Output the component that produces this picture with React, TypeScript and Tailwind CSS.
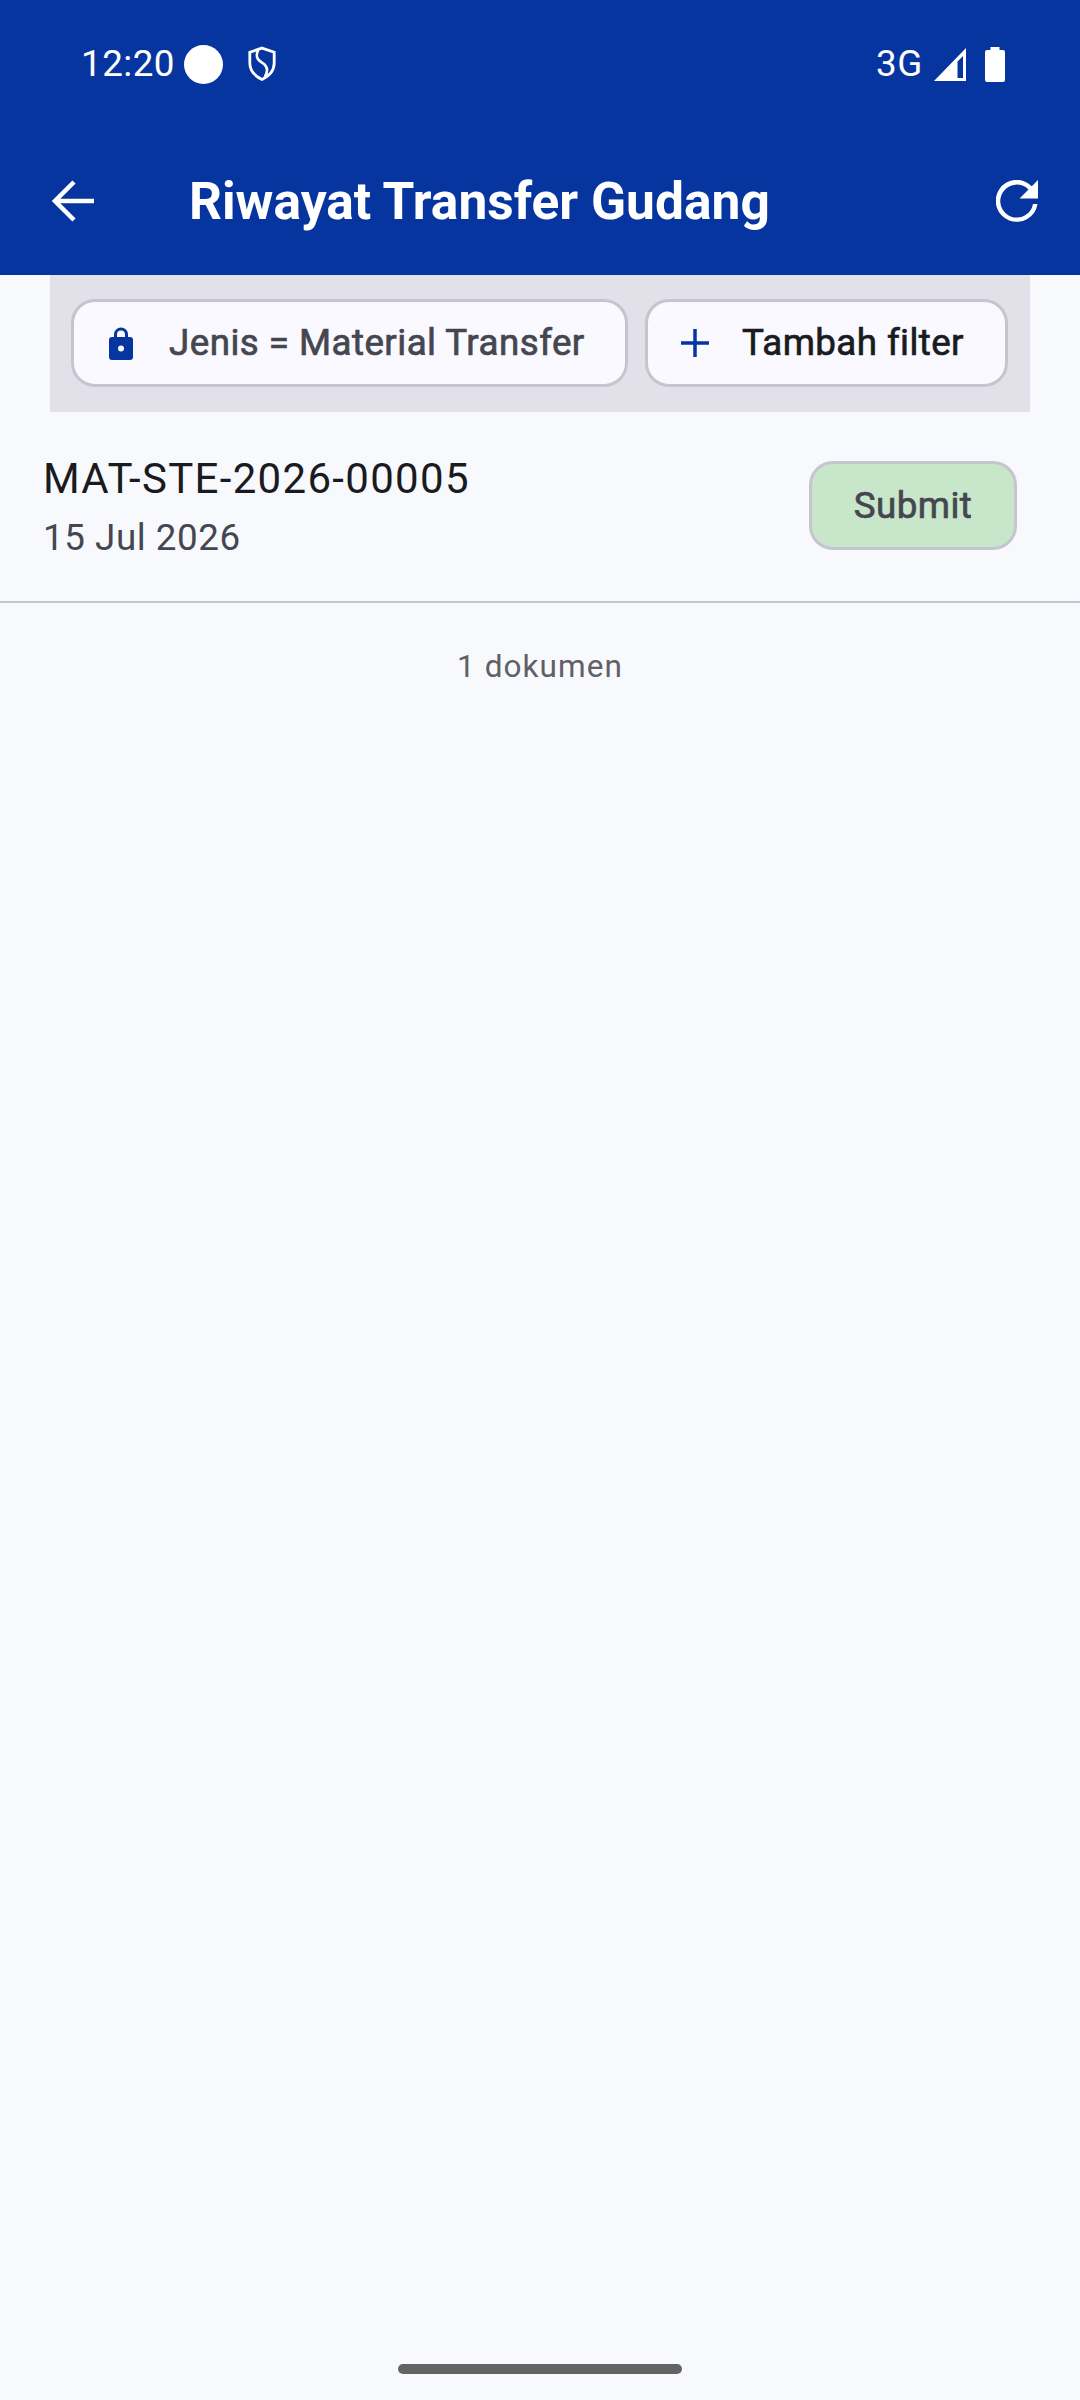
export default function App() {
  return (
    <div className="relative w-[1080px] h-[2400px] flex flex-col bg-[#f7f9fd] overflow-hidden" style={{ fontFamily: "Roboto, sans-serif" }}>
      <header className="h-[275px] shrink-0 bg-[#0735a0] text-white flex flex-col">
        <div className="h-[126px] pt-[42px] pl-[81px] pr-[75px] flex items-start justify-between">
          <div className="flex items-center h-[44px]">
            <span className="text-[36.75px] leading-[44px] tracking-[0.5px]">12:20</span>
            <span className="ml-[9px] w-[39px] h-[39px] rounded-full bg-white" />
            <svg className="ml-[24px]" width="30" height="36" viewBox="0 0 32 38" fill="none" stroke="white" strokeWidth="3">
              <path d="M16 2 L29 6.5 V18 C29 26 23.5 32 16 35.5 C8.500 32 3 26 3 18 V6.500 Z" />
              <path d="M12 4 C9 10 10 14 16 17.500 C22 21 23 26 19 33" strokeWidth="2.800" />
            </svg>
          </div>
          <div className="flex items-center h-[44px]">
            <span className="text-[36.75px] leading-[44px] tracking-[0.7px]">3G</span>
            <svg className="ml-[11px]" width="32" height="33" viewBox="0 0 32 33" fill="white">
              <path fillRule="evenodd" d="M32 0 V33 H0 Z M29 8 L23.500 13.500 V30 H29 Z" />
            </svg>
            <svg className="ml-[19px]" width="20" height="35" viewBox="0 0 20 35" fill="white">
              <path d="M5.500 0 H14.500 V3 H18 A2 2 0 0 1 20 5 V33 A2 2 0 0 1 18 35 H2 A2 2 0 0 1 0 33 V5 A2 2 0 0 1 2 3 H5.500 Z" />
            </svg>
          </div>
        </div>
        <div className="flex-1 flex items-center pl-[52px] pr-[42px]">
          <svg width="42" height="42" viewBox="0 0 42 42" fill="none" stroke="white" strokeWidth="4.500">
            <path d="M42 21 H3 M22 2 L3 21 L22 40" />
          </svg>
          <h1 className="ml-[95px] pt-[2px] flex-1 text-[51.5px] leading-[60px] font-bold whitespace-nowrap">Riwayat Transfer Gudang</h1>
          <svg width="42" height="42" viewBox="0 0 42 42" fill="white">
            <path d="M35.800 6.200 A21 21 0 1 0 41.500 24 H37 A16.500 16.500 0 1 1 32.500 9.500 L23.500 18.500 H42 V0 Z" />
          </svg>
        </div>
      </header>

      <div className="ml-[50px] w-[980px] h-[137px] shrink-0 bg-[#e2e1ea] pl-[21px] flex items-start pt-[24px] gap-[17px]">
        <div className="w-[557px] h-[88px] rounded-[24px] border-[3px] border-[#c6c5cf] bg-[#f9f9ff] flex items-center pl-[35px]">
          <svg width="24" height="33" viewBox="0 0 24 33" fill="#0735a0">
            <path fillRule="evenodd" d="M5 10 V7.500 A7 7 0 0 1 19 7.500 V10 H21 A3 3 0 0 1 24 13 V30 A3 3 0 0 1 21 33 H3 A3 3 0 0 1 0 30 V13 A3 3 0 0 1 3 10 Z M8 10 H16 V7.500 A4 4 0 0 0 8 7.500 Z M12 18.500 A3 3 0 1 0 12 24.500 A3 3 0 1 0 12 18.500 Z" />
          </svg>
          <span className="ml-[36px] text-[36.75px] leading-[44px] [-webkit-text-stroke:0.7px] tracking-[0.45px] text-[#45464f] whitespace-nowrap">Jenis = Material Transfer</span>
        </div>
        <div className="w-[363px] h-[88px] rounded-[24px] border-[3px] border-[#c6c5cf] bg-[#f9f9ff] flex items-center pl-[33px]">
          <svg width="28" height="28" viewBox="0 0 28 28" stroke="#0735a0" strokeWidth="3.500" fill="none">
            <path d="M14 0 V28 M0 14 H28" />
          </svg>
          <span className="ml-[33px] text-[36.75px] leading-[44px] [-webkit-text-stroke:0.7px] tracking-[0.4px] text-[#1a1b20] whitespace-nowrap">Tambah filter</span>
        </div>
      </div>

      <div className="h-[189px] shrink-0 flex items-start justify-between pl-[43px] pr-[63px]">
        <div className="pt-[42px]">
          <div className="text-[42px] leading-[50px] tracking-[1.31px] text-[#1a1b20] whitespace-nowrap">MAT-STE-2026-00005</div>
          <div className="mt-[12px] text-[36.75px] leading-[44px] tracking-[0.55px] text-[#45464f] whitespace-nowrap">15 Jul 2026</div>
        </div>
        <div className="mt-[49px] w-[208px] h-[89px] rounded-[24px] border-[3px] border-[#c6c5cf] bg-[#c8e6c9] flex items-center justify-center text-[36.75px] [-webkit-text-stroke:0.7px] tracking-[0.45px] text-[#45464f]">Submit</div>
      </div>
      <div className="h-[2px] shrink-0 bg-[#c6c5cf]" />
      <div className="mt-[44px] text-center text-[31.5px] leading-[40px] tracking-[1.05px] text-[#5f6066]">1 dokumen</div>

      <div className="mt-auto mb-[26px] mx-auto w-[284px] h-[10px] rounded-full bg-[#636363]" />
    </div>
  );
}
